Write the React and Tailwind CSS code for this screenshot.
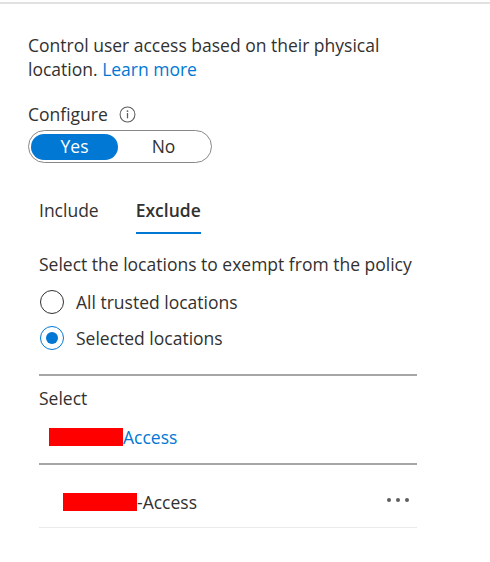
import React from "react";

const font = { fontFamily: '"Open Sans", "Noto Sans", sans-serif' };

function Redact({ className }) {
  return <span className={"inline-block bg-[#ff0000] " + className} />;
}

export default function App() {
  return (
    <div className="w-[490px] h-[562px] bg-white text-[#323130] text-[17.5px] overflow-hidden" style={font}>
      <div className="h-[2px] mt-[2px] bg-[#e1e1e1]" />
      <div className="pl-[28px] pt-[29px]">
        <p className="leading-[24px] w-[380px]">
          Control user access based on their physical
          <br />
          location. <span className="text-[#0078d4]">Learn more</span>
        </p>
        <div className="flex items-center mt-[21px] h-[24px]">
          <span>Configure</span>
          <svg className="ml-[11px]" width="17" height="17" viewBox="0 0 16 16">
            <circle cx="8" cy="8" r="7" fill="none" stroke="#605e5c" strokeWidth="1" />
            <circle cx="8" cy="4.8" r="0.9" fill="#605e5c" />
            <rect x="7.4" y="6.6" width="1.2" height="5" fill="#605e5c" />
          </svg>
        </div>
        <div className="mt-[4px] flex w-[184px] h-[33px] border-[1.5px] border-[#8a8886] rounded-full p-[2px] items-center">
          <div className="w-[87px] h-[26px] rounded-full bg-[#0078d4] text-white flex items-center justify-center">Yes</div>
          <div className="flex-1 flex items-center justify-center">No</div>
        </div>
      </div>
      <div className="pl-[39px]">
        <div className="flex mt-[33px] h-[38px]">
          <div className="pt-[1px]">Include</div>
          <div className="ml-[37px] flex flex-col">
            <div className="pt-[1px] font-semibold">Exclude</div>
            <div className="mt-[9px] h-[2px] bg-[#0078d4]" />
          </div>
        </div>
        <p className="mt-[18px] leading-[24px]">Select the locations to exempt from the policy</p>
        <div className="mt-[14px] flex flex-col gap-[12px]">
          <div className="flex items-center h-[24px]">
            <span className="w-[24px] h-[24px] rounded-full border-[1.5px] border-[#323130] ml-[1px]" />
            <span className="ml-[12px]">All trusted locations</span>
          </div>
          <div className="flex items-center h-[24px]">
            <span className="w-[24px] h-[24px] rounded-full border-[1.5px] border-[#0078d4] ml-[1px] flex items-center justify-center">
              <span className="w-[12px] h-[12px] rounded-full bg-[#0078d4]" />
            </span>
            <span className="ml-[12px]">Selected locations</span>
          </div>
        </div>
        <div className="w-[378px] mt-[24px] h-[2px] bg-[#a6a6a6]" />
        <div className="mt-[10px] leading-[24px]">Select</div>
        <div className="mt-[17px] ml-[10px] flex items-center h-[20px]">
          <Redact className="w-[74px] h-[18px]" />
          <span className="text-[#0078d4]">Access</span>
        </div>
        <div className="w-[378px] mt-[16px] h-[2px] bg-[#a6a6a6]" />
        <div className="w-[378px] flex items-center mt-[27px] h-[20px]">
          <Redact className="ml-[24px] w-[74px] h-[18px]" />
          <span>-Access</span>
          <span className="ml-auto mr-[8px] flex gap-[5px] items-center -mt-[4px]">
            <span className="w-[4px] h-[4px] rounded-full bg-[#605e5c]" />
            <span className="w-[4px] h-[4px] rounded-full bg-[#605e5c]" />
            <span className="w-[4px] h-[4px] rounded-full bg-[#605e5c]" />
          </span>
        </div>
        <div className="w-[378px] mt-[15px] h-[1px] bg-[#edebe9]" />
      </div>
    </div>
  );
}
